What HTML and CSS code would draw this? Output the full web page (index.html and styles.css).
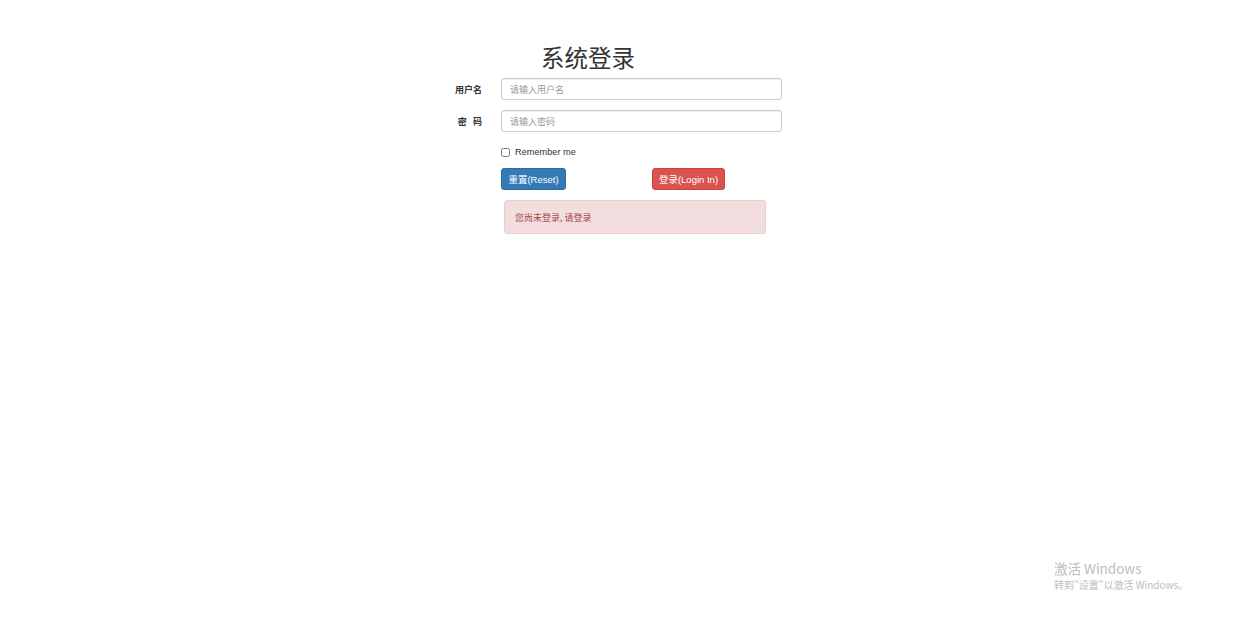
FILE: index.html
```html
<!DOCTYPE html>
<html lang="zh-CN">
<head>
  <meta charset="UTF-8" />
  <title>系统登录</title>
  <link rel="stylesheet" href="styles.css">
</head>
<body>
  <div class="login">
    <h2 class="title">系统登录</h2>
    <form class="login-form">
      <div class="row">
        <label class="label">用户名</label>
        <input class="field" type="text" placeholder="请输入用户名" />
      </div>
      <div class="row">
        <label class="label">密&nbsp;&nbsp;&nbsp;码</label>
        <input class="field" type="password" placeholder="请输入密码" />
      </div>
      <div class="row check">
        <label class="remember"><input type="checkbox" /> Remember me</label>
      </div>
      <div class="row buttons">
        <button type="reset" class="btn btn-reset">重置(Reset)</button>
        <button type="button" class="btn btn-login">登录(Login In)</button>
      </div>
    </form>
    <div class="alert">您尚未登录, 请登录</div>
  </div>

  <div class="activate">
    <div class="act-title">激活 Windows</div>
    <div class="act-sub">转到"设置"以激活 Windows。</div>
  </div>
</body>
</html>
```

FILE: styles.css
```css
body {
  margin: 0;
  font-family: "Liberation Sans", Arial, "Noto Sans CJK SC", sans-serif;
  color: #333;
  background: #fff;
}
.login {
  width: 334px;
  margin: 0 auto;
  padding: 40px 12px 0 0;
}
.title {
  margin: 0 0 4px 0;
  padding-left: 93px;
  font-size: 23.5px;
  font-weight: normal;
  line-height: 34px;
  font-family: "Noto Sans CJK SC", sans-serif;
}
.row {
  display: flex;
  align-items: center;
  gap: 19px;
  margin-bottom: 10px;
}
.label {
  width: 34px;
  text-align: right;
  font-size: 9px;
  font-weight: bold;
  font-family: "Noto Sans CJK SC", sans-serif;
  white-space: nowrap;
}
.field {
  box-sizing: border-box;
  width: 281px;
  height: 22px;
  padding: 0 8px;
  border: 1px solid #ccc;
  border-radius: 3px;
  box-shadow: inset 0 1px 1px rgba(0,0,0,0.075);
  font-size: 9px;
  font-family: "Noto Sans CJK SC", sans-serif;
}
.field::placeholder {
  color: #999;
}
.check {
  padding-left: 53px;
  margin-top: 15px;
  margin-bottom: 11px;
}
.remember {
  display: flex;
  align-items: center;
  gap: 5px;
  font-size: 9.2px;
}
.remember input {
  margin: 0;
  width: 9px;
  height: 9px;
}
.buttons {
  padding-left: 53px;
  gap: 86px;
}
.btn {
  height: 22px;
  padding: 0;
  border: 1px solid transparent;
  border-radius: 3px;
  color: #fff;
  font-size: 9.5px;
  white-space: nowrap;
  font-family: "Liberation Sans", Arial, "Noto Sans CJK SC", sans-serif;
  cursor: pointer;
}
.btn-reset {
  width: 65px;
  background: #337ab7;
  border-color: #2e6da4;
}
.btn-login {
  width: 73px;
  background: #d9534f;
  border-color: #d43f3a;
}
.alert {
  box-sizing: border-box;
  width: 262px;
  height: 34px;
  margin: 0 0 0 56px;
  padding: 0 10px;
  display: flex;
  align-items: center;
  background: #f2dede;
  border: 1px solid #ebccd1;
  border-radius: 3px;
  color: #a94442;
  font-size: 9px;
  font-family: "Noto Sans CJK SC", sans-serif;
}
.activate {
  position: absolute;
  left: 1054px;
  top: 558px;
  color: #bdbdbd;
  font-family: "Noto Sans CJK SC", sans-serif;
}
.act-title {
  font-size: 13.5px;
  line-height: 20px;
}
.act-sub {
  font-size: 10px;
  line-height: 13px;
}
```
